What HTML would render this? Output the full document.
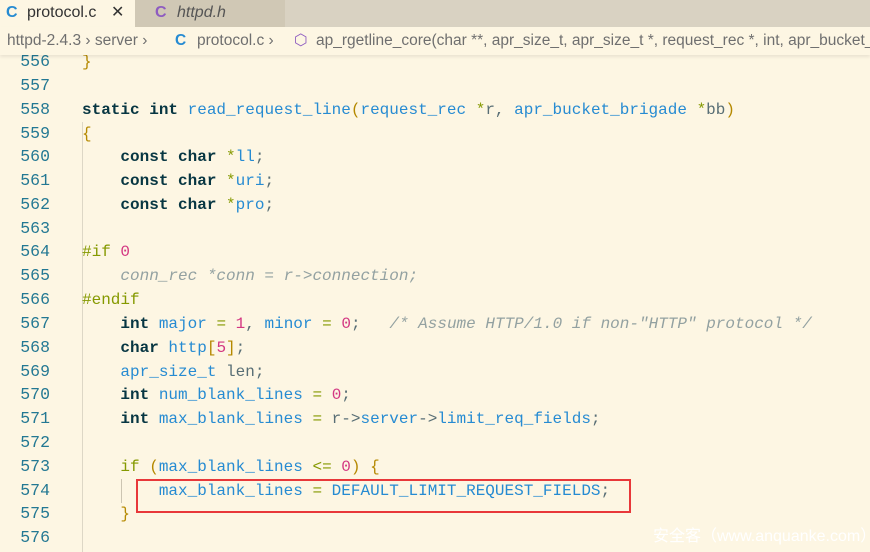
<!DOCTYPE html>
<html><head><meta charset="utf-8"><style>
body{margin:0;width:870px;height:550px;overflow:hidden;background:#fdf6e3;position:relative;font-family:"Liberation Sans",sans-serif}
.tabs{position:absolute;left:0;top:0;width:870px;height:27px;background:#d9d2c2}
.tab{position:absolute;top:0;height:27px;font-size:16px;line-height:25px;color:#333}
.crumb{position:absolute;left:0;top:27px;width:870px;height:28px;background:#fdf6e3;box-shadow:0 2px 3px rgba(0,0,0,.08);font-size:15.5px;line-height:28px;color:#6f6f6f;white-space:nowrap;z-index:2}
.ln{position:absolute;left:0;width:50px;text-align:right;color:#237893;font:16.5px "Liberation Mono",monospace;line-height:24px}
.cd{position:absolute;left:82px;white-space:pre;color:#586e75;font:16px "Liberation Mono",monospace;line-height:24px}
.k{color:#073642;font-weight:bold}.b{color:#268bd2}.n{color:#d33682}.g{color:#859900}.o{color:#b58900}.c{color:#93a1a1;font-style:italic}
</style></head><body>
<div class="tabs">
<div class="tab" style="left:0;width:135px;background:#fdf6e3"><span style="position:absolute;left:6px;color:#268bd2;font-weight:bold">C</span><span style="position:absolute;left:27px">protocol.c</span><span style="position:absolute;left:111px;font-size:16px">✕</span></div>
<div class="tab" style="left:135px;width:150px;background:#d0c8b5"><span style="position:absolute;left:20px;color:#8e5cc0;font-weight:bold">C</span><span style="position:absolute;left:42px;font-style:italic;color:#555">httpd.h</span></div>
</div>
<div class="crumb"><span style="position:absolute;left:7px">httpd-2.4.3 › server ›</span><span style="position:absolute;left:175px;color:#268bd2;font-weight:bold">C</span><span style="position:absolute;left:197px">protocol.c ›</span><span style="position:absolute;left:294px;color:#8e5cc0">⬡</span><span style="position:absolute;left:316px">ap_rgetline_core(char **, apr_size_t, apr_size_t *, request_rec *, int, apr_bucket_</span></div>
<div style="position:absolute;left:82px;top:122px;width:1px;height:430px;background:#ddd7c6"></div>
<div style="position:absolute;left:121px;top:479px;width:1px;height:24px;background:#ccc5b2"></div>
<div class="ln" style="top:50px">556</div><div class="cd" style="top:50px"><span class="o">}</span></div>
<div class="ln" style="top:74px">557</div>
<div class="ln" style="top:98px">558</div><div class="cd" style="top:98px"><span class="k">static int</span> <span class="b">read_request_line</span><span class="o">(</span><span class="b">request_rec</span> <span class="g">*</span>r, <span class="b">apr_bucket_brigade</span> <span class="g">*</span>bb<span class="o">)</span></div>
<div class="ln" style="top:122px">559</div><div class="cd" style="top:122px"><span class="o">{</span></div>
<div class="ln" style="top:145px">560</div><div class="cd" style="top:145px">    <span class="k">const char</span> <span class="g">*</span><span class="b">ll</span>;</div>
<div class="ln" style="top:169px">561</div><div class="cd" style="top:169px">    <span class="k">const char</span> <span class="g">*</span><span class="b">uri</span>;</div>
<div class="ln" style="top:193px">562</div><div class="cd" style="top:193px">    <span class="k">const char</span> <span class="g">*</span><span class="b">pro</span>;</div>
<div class="ln" style="top:217px">563</div>
<div class="ln" style="top:240px">564</div><div class="cd" style="top:240px"><span class="g">#if</span> <span class="n">0</span></div>
<div class="ln" style="top:264px">565</div><div class="cd" style="top:264px"><span class="c">    conn_rec *conn = r-&gt;connection;</span></div>
<div class="ln" style="top:288px">566</div><div class="cd" style="top:288px"><span class="g">#endif</span></div>
<div class="ln" style="top:312px">567</div><div class="cd" style="top:312px">    <span class="k">int</span> <span class="b">major</span> <span class="g">=</span> <span class="n">1</span>, <span class="b">minor</span> <span class="g">=</span> <span class="n">0</span>;   <span class="c">/* Assume HTTP/1.0 if non-"HTTP" protocol */</span></div>
<div class="ln" style="top:336px">568</div><div class="cd" style="top:336px">    <span class="k">char</span> <span class="b">http</span><span class="o">[</span><span class="n">5</span><span class="o">]</span>;</div>
<div class="ln" style="top:360px">569</div><div class="cd" style="top:360px">    <span class="b">apr_size_t</span> len;</div>
<div class="ln" style="top:383px">570</div><div class="cd" style="top:383px">    <span class="k">int</span> <span class="b">num_blank_lines</span> <span class="g">=</span> <span class="n">0</span>;</div>
<div class="ln" style="top:407px">571</div><div class="cd" style="top:407px">    <span class="k">int</span> <span class="b">max_blank_lines</span> <span class="g">=</span> r-&gt;<span class="b">server</span>-&gt;<span class="b">limit_req_fields</span>;</div>
<div class="ln" style="top:431px">572</div>
<div class="ln" style="top:455px">573</div><div class="cd" style="top:455px">    <span class="g">if</span> <span class="o">(</span><span class="b">max_blank_lines</span> <span class="g">&lt;=</span> <span class="n">0</span><span class="o">)</span> <span class="o">{</span></div>
<div class="ln" style="top:479px">574</div><div class="cd" style="top:479px">        <span class="b">max_blank_lines</span> <span class="g">=</span> <span class="b">DEFAULT_LIMIT_REQUEST_FIELDS</span>;</div>
<div class="ln" style="top:502px">575</div><div class="cd" style="top:502px">    <span class="o">}</span></div>
<div class="ln" style="top:526px">576</div>
<div style="position:absolute;left:136px;top:479px;width:491px;height:30px;border:2px solid #e8383a"></div>
<div style="position:absolute;left:653px;top:522px;color:#fff;font:13px "Liberation Sans","Noto Sans CJK SC",sans-serif;opacity:.9">安全客（www.anquanke.com）</div>
</body></html>
